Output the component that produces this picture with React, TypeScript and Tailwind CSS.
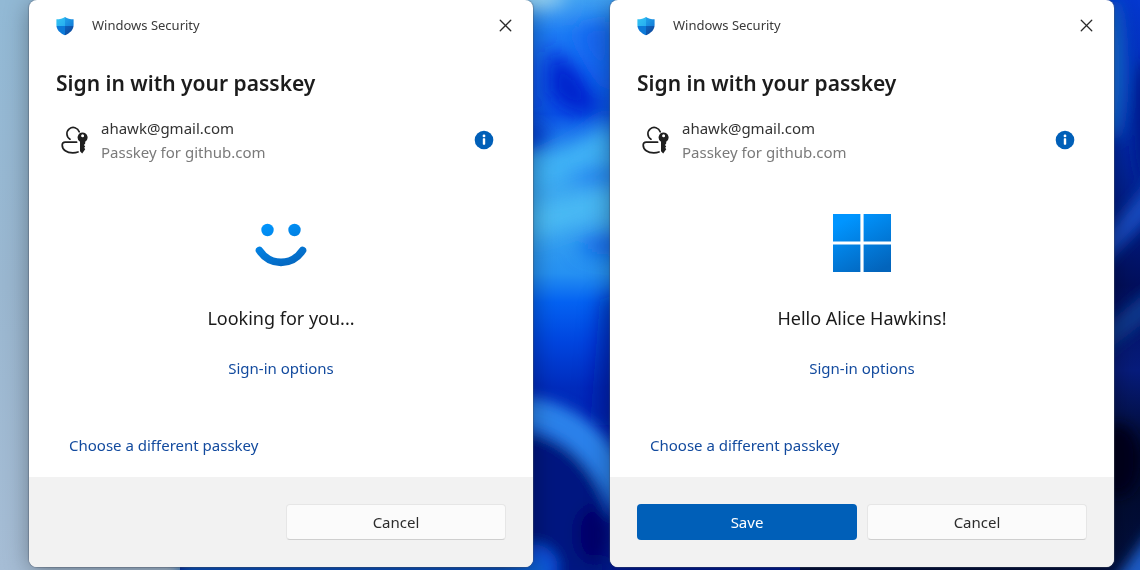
import type { ReactNode } from "react";
import { X } from "lucide-react";

interface PasskeyDialogProps {
  account: string;
  site: string;
  message: string;
  picture: ReactNode;
  canSave?: boolean;
}

function Wallpaper() {
  return (
    <svg
      className="absolute inset-0 h-full w-full"
      viewBox="0 0 1140 570"
      preserveAspectRatio="none"
      aria-hidden="true"
    >
      <defs>
        <linearGradient id="sky" x1="0" y1="0" x2="0" y2="1">
          <stop offset="0" stopColor="#92b9d5" />
          <stop offset="0.5" stopColor="#9ab7d0" />
          <stop offset="1" stopColor="#a6bdd5" />
        </linearGradient>
        <linearGradient id="bloom" x1="0" y1="0" x2="0" y2="1">
          <stop offset="0" stopColor="#3fa0f2" />
          <stop offset="0.06" stopColor="#1d7cf5" />
          <stop offset="0.13" stopColor="#1263f5" />
          <stop offset="0.2" stopColor="#0a55ea" />
          <stop offset="0.28" stopColor="#35a0f0" />
          <stop offset="0.38" stopColor="#3ea8f0" />
          <stop offset="0.48" stopColor="#2590f2" />
          <stop offset="0.53" stopColor="#0462f2" />
          <stop offset="0.6" stopColor="#0045df" />
          <stop offset="0.68" stopColor="#002cbd" />
          <stop offset="1" stopColor="#001a96" />
        </linearGradient>
        <linearGradient id="night" x1="0" y1="0" x2="0" y2="1">
          <stop offset="0" stopColor="#0438cf" />
          <stop offset="0.25" stopColor="#0229a8" />
          <stop offset="0.5" stopColor="#020f5c" />
          <stop offset="0.65" stopColor="#071c7c" />
          <stop offset="0.8" stopColor="#010928" />
          <stop offset="1" stopColor="#03103f" />
        </linearGradient>
        <filter id="soft" x="-50%" y="-50%" width="200%" height="200%">
          <feGaussianBlur stdDeviation="10" />
        </filter>
        <filter id="softer" x="-50%" y="-50%" width="200%" height="200%">
          <feGaussianBlur stdDeviation="7" />
        </filter>
      </defs>
      <rect width="1140" height="570" fill="url(#sky)" />
      <rect x="180" width="620" height="570" fill="url(#bloom)" />
      <rect x="800" width="340" height="570" fill="url(#night)" />

      {/* petals between the two windows */}
      <g filter="url(#soft)">
        <ellipse cx="535" cy="-4" rx="30" ry="12" fill="#a5d8ee" />
        <path d="M548 50 Q580 60 602 112 Q572 122 548 95 Z" fill="#0020cc" />
        <ellipse cx="530" cy="135" rx="20" ry="13" fill="#0038d0" />
        <path d="M572 30 L612 20 L612 100 Z" fill="#1665ee" />
        <path d="M535 165 Q580 150 612 120 L612 155 L535 190 Z" fill="#42b6f6" />
        <ellipse cx="602" cy="176" rx="34" ry="8" fill="#1f7df0" />
        <path d="M530 208 L612 190 L612 210 L530 238 Z" fill="#4cbcf4" />
        <ellipse cx="616" cy="246" rx="38" ry="10" fill="#0b60e8" />
        <path d="M600 300 L630 290 L630 425 L590 425 Z" fill="#0018a4" opacity="0.5" />
      </g>
      <g filter="url(#softer)">
        <path
          d="M510 412 Q590 412 628 506"
          fill="none"
          stroke="#2c82ea"
          strokeWidth="32"
        />
        <path d="M505 432 Q575 432 600 490 L608 580 L505 580 Z" fill="#001480" />
        <ellipse cx="592" cy="534" rx="16" ry="28" fill="#00056c" />
        <ellipse cx="532" cy="568" rx="26" ry="24" fill="#0a50dc" />
        <path d="M180 562 H545 V580 H180 Z" fill="#0c62cc" />
      </g>

      {/* dark folds at the right edge */}
      <g filter="url(#softer)">
        <ellipse cx="1114" cy="70" rx="10" ry="70" fill="#1570dc" />
        <ellipse cx="1144" cy="120" rx="10" ry="60" fill="#001a8c" />
        <path d="M1100 240 L1155 175 L1155 212 L1100 268 Z" fill="#1249bd" />
        <path d="M1100 330 L1155 285 L1155 314 L1100 356 Z" fill="#10388c" />
        <ellipse cx="1118" cy="460" rx="22" ry="36" fill="#00051f" />
        <path d="M1108 590 L1155 525 L1155 590 Z" fill="#1f5cc4" />
      </g>
    </svg>
  );
}

function ShieldIcon() {
  return (
    <svg className="h-5 w-5" viewBox="0 0 20 20" aria-hidden="true">
      <defs>
        <linearGradient id="shieldLeft" x1="0" y1="0" x2="1" y2="1">
          <stop offset="0" stopColor="#36c8f2" />
          <stop offset="1" stopColor="#27aef0" />
        </linearGradient>
        <linearGradient id="shieldRight" x1="0" y1="0" x2="1" y2="1">
          <stop offset="0" stopColor="#22a6ec" />
          <stop offset="1" stopColor="#1379d6" />
        </linearGradient>
        <linearGradient id="shieldBottom" x1="0" y1="0" x2="1" y2="1">
          <stop offset="0" stopColor="#0e62be" />
          <stop offset="1" stopColor="#0f4290" />
        </linearGradient>
        <clipPath id="shieldShape">
          <path d="M10 0.900 C12.200 2.600 15.200 3.300 18.600 3.300 V9 C18.600 13.800 15 17.200 10 19.200 C5 17.200 1.400 13.800 1.400 9 V3.300 C4.800 3.300 7.800 2.600 10 0.900 Z" />
        </clipPath>
      </defs>
      <g clipPath="url(#shieldShape)">
        <rect width="10" height="10" fill="url(#shieldLeft)" />
        <rect x="10" width="10" height="10" fill="url(#shieldRight)" />
        <rect y="10" width="10" height="10" fill="#0d7ad8" />
        <rect x="10" y="10" width="10" height="10" fill="url(#shieldBottom)" />
      </g>
    </svg>
  );
}

function PersonKeyIcon() {
  return (
    <svg className="h-8 w-8 shrink-0" viewBox="0 0 32 32" fill="none" aria-hidden="true">
      <g stroke="#1f1f1f" strokeWidth="1.700" strokeLinecap="round">
        <path d="M14 15.200 A6.300 6.300 0 1 1 23.200 7.800" />
        <path d="M20.600 18.200 H9.200 C7.200 18.200 6.200 19.300 6.200 21 C6.200 26 10.800 28.800 16.800 28.800 C19 28.800 20.600 28.500 22 28" />
      </g>
      <path
        fillRule="evenodd"
        fill="#1f1f1f"
        d="M26.400 8.400 A5.100 5.100 0 0 1 29.200 17.800 V19.600 L28 21 L29.200 22.400 L28.200 23.800 L29.200 25.200 L26.200 29.600 L24 27.200 V17.800 A5.100 5.100 0 0 1 26.400 8.400 Z M26.600 10.300 A1.500 1.500 0 1 0 26.600 13.300 A1.500 1.500 0 1 0 26.600 10.300 Z"
      />
    </svg>
  );
}

function InfoIcon() {
  return (
    <svg className="h-5 w-5" viewBox="0 0 20 20" aria-hidden="true">
      <circle cx="10" cy="10" r="9.300" fill="#005fb8" />
      <circle cx="10" cy="5.900" r="1.400" fill="#fff" />
      <rect x="8.800" y="8.300" width="2.400" height="6.400" rx="0.600" fill="#fff" />
    </svg>
  );
}

function HelloFace() {
  return (
    <svg className="h-[58px] w-[58px]" viewBox="0 0 58 58" fill="none" aria-hidden="true">
      <defs>
        <linearGradient id="face" gradientUnits="userSpaceOnUse" x1="20" y1="10" x2="34" y2="54">
          <stop offset="0" stopColor="#0093fb" />
          <stop offset="1" stopColor="#0566be" />
        </linearGradient>
      </defs>
      <circle cx="15.500" cy="16" r="6.200" fill="url(#face)" />
      <circle cx="42.500" cy="16" r="6.200" fill="url(#face)" />
      <path
        d="M7.500 36.500 C18 52.300 40 52.300 50.500 36.500"
        stroke="url(#face)"
        strokeWidth="7.600"
        strokeLinecap="round"
      />
    </svg>
  );
}

function WindowsLogo() {
  return (
    <svg className="h-[58px] w-[58px]" viewBox="0 0 58 58" aria-hidden="true">
      <defs>
        <linearGradient id="panes" gradientUnits="userSpaceOnUse" x1="16" y1="4" x2="44" y2="58">
          <stop offset="0" stopColor="#0095ff" />
          <stop offset="1" stopColor="#0364bb" />
        </linearGradient>
      </defs>
      <path
        fill="url(#panes)"
        d="M0 0 H27.400 V27.400 H0 Z M30.600 0 H58 V27.400 H30.600 Z M0 30.600 H27.400 V58 H0 Z M30.600 30.600 H58 V58 H30.600 Z"
      />
    </svg>
  );
}

function PasskeyDialog({ account, site, message, picture, canSave }: PasskeyDialogProps) {
  return (
    <section
      role="dialog"
      aria-label="Windows Security"
      className="flex flex-col overflow-hidden rounded-lg bg-white shadow-[0_4px_24px_rgba(0,0,0,0.35),0_0_1px_1px_rgba(90,100,120,0.4)]"
    >
      <header className="flex h-[51px] items-center pr-[17px] pl-[26px]">
        <ShieldIcon />
        <span className="ml-[17px] text-[13px] text-[#3a3a3a]">Windows Security</span>
        <button type="button" aria-label="Close" className="ml-auto text-[#2a2a2a]">
          <X className="h-[21px] w-[21px]" strokeWidth={1.5} />
        </button>
      </header>

      <div className="flex flex-col px-[27px] pt-4">
        <h1 className="text-[21px] leading-8 font-semibold text-[#1c1c1c]">
          Sign in with your passkey
        </h1>

        <div className="mt-[17px] flex items-center pr-3">
          <PersonKeyIcon />
          <div className="ml-[13px] text-[15px] leading-6">
            <p className="text-[#333333]">{account}</p>
            <p className="text-[#7a7a7a]">Passkey for {site}</p>
          </div>
          <button type="button" aria-label="Passkey details" className="ml-auto">
            <InfoIcon />
          </button>
        </div>

        <div className="mt-[50px] flex flex-col items-center">
          {picture}
          <p className="mt-8 text-[18px] leading-7 text-[#1a1a1a]">{message}</p>
          <a href="#" className="mt-6 text-[15px] leading-6 text-[#124a9e]">
            Sign-in options
          </a>
        </div>

        <a
          href="#"
          className="mt-[53px] mb-5 ml-[13px] self-start text-[15px] leading-6 text-[#124a9e]"
        >
          Choose a different passkey
        </a>
      </div>

      <footer className="grid grid-cols-2 gap-2.5 bg-[#f2f2f2] p-[27px] text-[15px]">
        {canSave && (
          <button type="button" className="h-9 rounded bg-[#005fb8] text-white">
            Save
          </button>
        )}
        <button
          type="button"
          className="col-start-2 h-9 rounded border border-[#e6e6e6] border-b-[#cfcfcf] bg-[#fbfbfb] text-[#2c2c2c]"
        >
          Cancel
        </button>
      </footer>
    </section>
  );
}

export default function App() {
  return (
    <main className="relative min-h-screen overflow-hidden font-['Noto_Sans',sans-serif]">
      <Wallpaper />
      <div className="relative grid grid-cols-2 items-start gap-[77px] pr-[26px] pl-[29px]">
        <PasskeyDialog
          account="ahawk@gmail.com"
          site="github.com"
          message="Looking for you..."
          picture={<HelloFace />}
        />
        <PasskeyDialog
          account="ahawk@gmail.com"
          site="github.com"
          message="Hello Alice Hawkins!"
          picture={<WindowsLogo />}
          canSave
        />
      </div>
    </main>
  );
}
